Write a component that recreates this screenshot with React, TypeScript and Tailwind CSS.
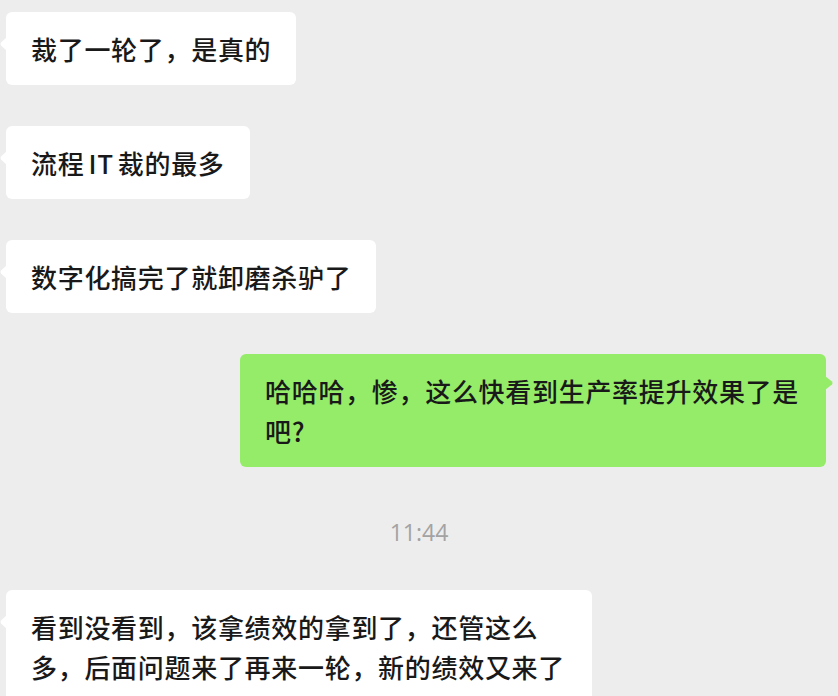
import React from "react";

const font = { fontFamily: '"Noto Sans CJK SC", "Noto Sans", sans-serif' };

function LeftBubble({ children }: { children: React.ReactNode }) {
  return (
    <div className="relative ml-[6px] max-w-[586px] self-start rounded-[6px] bg-white px-[25px] pt-[17px] pb-[16px] text-[26px] font-medium leading-[40px] tracking-[0.7px] text-[#191919]">
      <svg className="absolute left-[-6px] top-[25px]" width="7" height="14" viewBox="0 0 7 14">
        <path d="M7 0 L1 5.6 Q0 7 1 8.4 L7 14 Z" fill="#ffffff" />
      </svg>
      {children}
    </div>
  );
}

function RightBubble({ children }: { children: React.ReactNode }) {
  return (
    <div className="relative mr-[12px] max-w-[586px] self-end rounded-[6px] bg-[#95ec69] px-[25px] pt-[17px] pb-[16px] text-[26px] font-medium leading-[40px] tracking-[0.7px] text-[#191919]">
      <svg className="absolute right-[-7px] top-[22px]" width="8" height="14" viewBox="0 0 8 14">
        <path d="M0 0 L7 5.6 Q8 7 7 8.4 L0 14 Z" fill="#95ec69" />
      </svg>
      {children}
    </div>
  );
}

export default function App() {
  return (
    <div className="h-[696px] w-[838px] overflow-hidden bg-[#ededed]" style={font}>
      <div className="flex flex-col pt-[12px]">
        <div className="flex flex-col gap-[41px]">
          <LeftBubble>裁了一轮了，是真的</LeftBubble>
          <LeftBubble>
            流程<span className="mx-[4px]">IT</span>裁的最多
          </LeftBubble>
          <LeftBubble>数字化搞完了就卸磨杀驴了</LeftBubble>
          <RightBubble>哈哈哈，惨，这么快看到生产率提升效果了是吧?</RightBubble>
        </div>
        <div
          className="mt-[49px] text-center text-[23px] leading-[32px] text-[#a3a3a3]"
          style={{ fontFamily: '"Open Sans", "Liberation Sans", sans-serif' }}
        >
          11:44
        </div>
        <div className="mt-[42px] flex flex-col">
          <LeftBubble>看到没看到，该拿绩效的拿到了，还管这么多，后面问题来了再来一轮，新的绩效又来了</LeftBubble>
        </div>
      </div>
    </div>
  );
}
